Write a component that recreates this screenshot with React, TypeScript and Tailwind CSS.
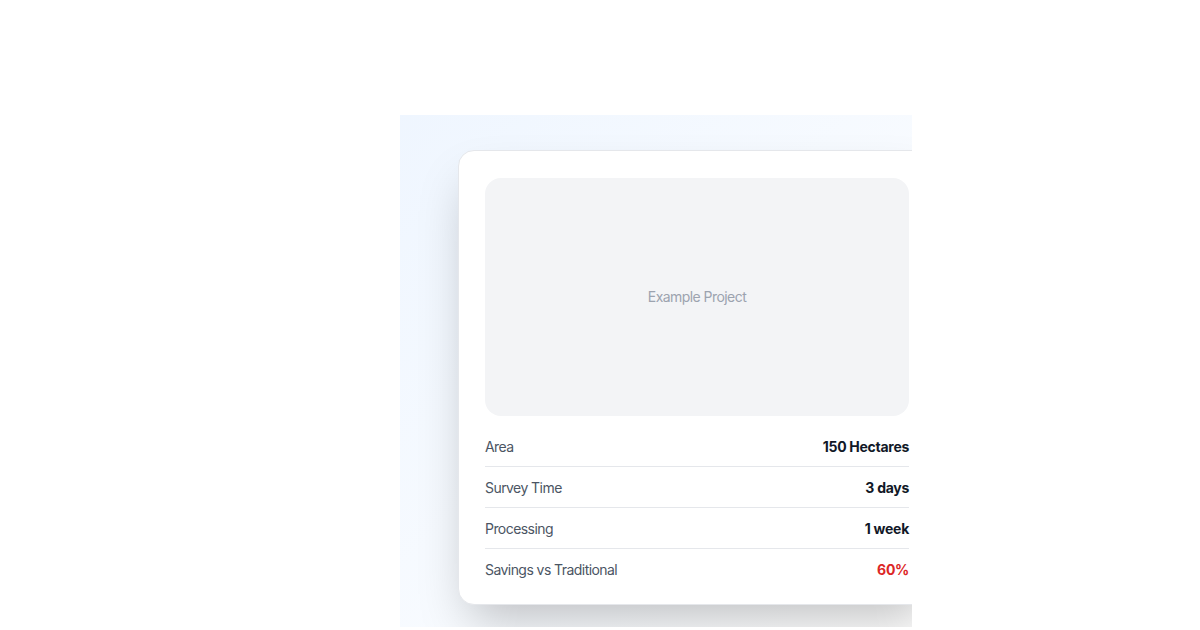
const stats = [
  { label: 'Area', value: '150 Hectares' },
  { label: 'Survey Time', value: '3 days' },
  { label: 'Processing', value: '1 week' },
  { label: 'Savings vs Traditional', value: '60%', accent: true },
];

export default function App() {
  return (
    <div
      className="min-h-screen bg-white pt-[115px] pl-[400px]"
      style={{ fontFamily: 'Inter, "Noto Sans", sans-serif' }}
    >
      <div className="w-[512px] h-[512px] overflow-hidden bg-gradient-to-br from-blue-50 to-white">
        <div className="ml-[58px] mt-[35px] w-[478px] rounded-2xl border border-gray-200 bg-white px-[26px] pt-[27px] pb-[15px] shadow-2xl">
          <div className="flex h-[238px] items-center justify-center rounded-2xl bg-gray-100">
            <span className="text-sm tracking-[-0.04em] text-[#9ca3af]">Example Project</span>
          </div>
          <div className="mt-[10px]">
            {stats.map((s) => (
              <div
                key={s.label}
                className="flex h-[41px] items-center justify-between border-b border-gray-200 last:h-[40px] last:border-b-0"
              >
                <span className="pt-px text-sm tracking-[-0.04em] text-[#4b5563]">{s.label}</span>
                <span
                  className={
                    s.accent
                      ? 'pt-px text-sm font-bold tracking-[-0.02em] text-[#dc2626]'
                      : 'pt-px text-sm font-bold tracking-[-0.02em] text-[#111827]'
                  }
                >
                  {s.value}
                </span>
              </div>
            ))}
          </div>
        </div>
      </div>
    </div>
  );
}
